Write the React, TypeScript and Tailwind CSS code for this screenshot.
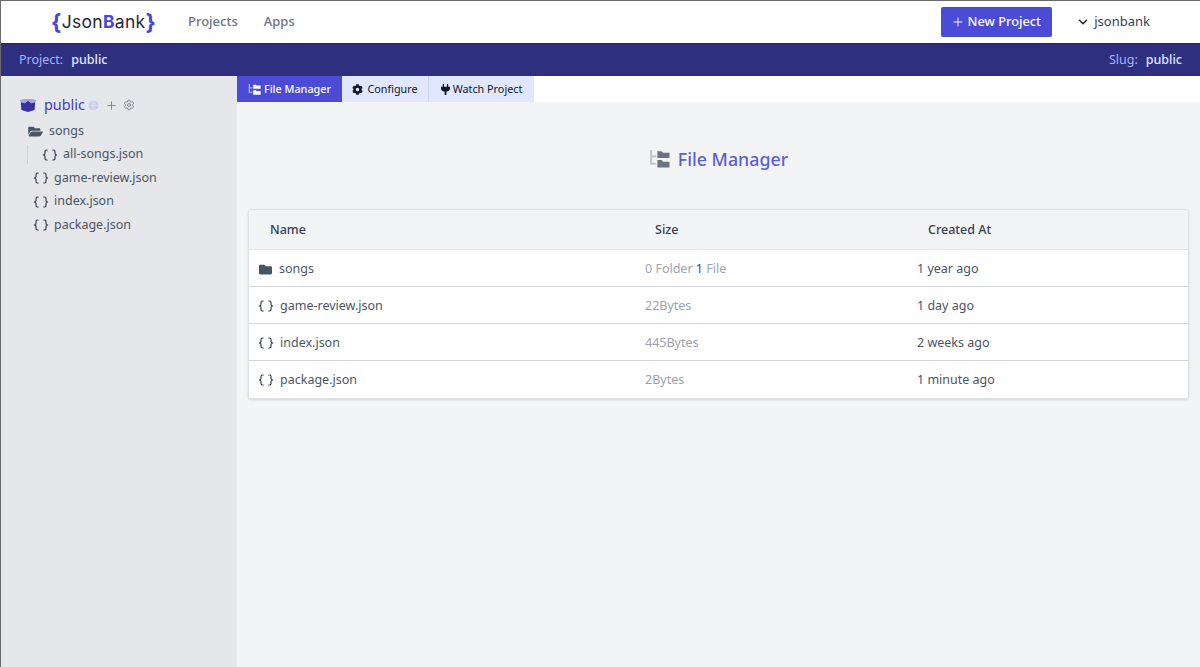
import React from "react";
import { ChevronDown, Plus, Settings } from "lucide-react";
import { FaCog, FaFolder, FaFolderOpen } from "react-icons/fa";

const font = { fontFamily: '"Noto Sans", sans-serif' };

function CurlyIcon({ className }: { className?: string }) {
  return (
    <svg viewBox="0 0 16 12" fill="none" stroke="currentColor" strokeWidth="1.2" strokeLinecap="round" strokeLinejoin="round" className={className}>
      <path d="M5.2 1H4.4C3.5 1 3 1.5 3 2.4V4.4C3 5.2 2.5 5.7 1.4 6C2.5 6.3 3 6.8 3 7.6V9.6C3 10.5 3.5 11 4.4 11H5.2" />
      <path d="M10.8 1H11.6C12.5 1 13 1.5 13 2.4V4.4C13 5.2 13.5 5.7 14.6 6C13.5 6.3 13 6.8 13 7.6V9.6C13 10.5 12.5 11 11.6 11H10.8" />
    </svg>
  );
}

function TreeIcon({ className, fade, solid }: { className?: string; fade: string; solid: string }) {
  return (
    <svg viewBox="0 0 20 17" className={className}>
      <path d="M1 0H3V5H7V7H3V12H7V14H1Z" fill={fade} />
      <path d="M8 1H12L13.5 2.5H19.5V7.5H8Z" fill={solid} />
      <path d="M8 9.5H12L13.5 11H19.5V16.5H8Z" fill={solid} />
    </svg>
  );
}

function BoxIcon() {
  return (
    <svg viewBox="0 0 16 13" className="w-[16px] h-[13px]">
      <path d="M0 1L3.5 0L12.5 0L16 1L15.5 3.5L11 4.2L8 1.8L5 4.2L0.5 3.5Z" fill="#a5a6e0" />
      <path d="M0.8 3.5L5 4.2L8 1.8L11 4.2L15.2 3.5L14.6 11L8 13L1.4 11Z" fill="#3730a3" />
    </svg>
  );
}

function GlobeIcon() {
  return (
    <svg viewBox="0 0 12 12" className="ml-[3px] w-[11px] h-[11px]" fill="none">
      <circle cx="6" cy="6" r="5.5" fill="#c7cbe8" />
      <path d="M0.5 6H11.5M6 0.5V11.5M6 0.5C3.5 3.5 3.5 8.5 6 11.5M6 0.5C8.5 3.5 8.5 8.5 6 11.5" stroke="#e5e7eb" strokeWidth="0.6" />
    </svg>
  );
}

function PlugIcon() {
  return (
    <svg viewBox="0 0 10 12" className="w-[9px] h-[11px]" fill="currentColor">
      <path d="M2 0H3.4V3H6.6V0H8V3H10V4.6C10 6.6 8.6 8 6 8.3V12H4V8.3C1.4 8 0 6.6 0 4.6V3H2Z" />
    </svg>
  );
}

function SidebarFile({ name, nested }: { name: string; nested?: boolean }) {
  return (
    <div className={`flex items-center h-[23.5px] text-[12.5px] text-[#4b5563] ${nested ? "ml-[26px]" : "ml-[32px]"}`}>
      {nested && <span className="w-px h-[19px] bg-[#d1d5db] mr-[14px]" />}
      <CurlyIcon className="w-[16px] h-[12px] text-[#374151] mr-[5px]" />
      <span>{name}</span>
    </div>
  );
}

const rows = [
  { name: "game-review.json", size: "22Bytes", created: "1 day ago" },
  { name: "index.json", size: "445Bytes", created: "2 weeks ago" },
  { name: "package.json", size: "2Bytes", created: "1 minute ago" },
];

export default function App() {
  return (
    <div className="min-h-[667px] flex flex-col bg-[#f3f4f6] border-t border-l border-[#6b6b6b]" style={font}>
      {/* Top nav */}
      <header className="h-[42px] bg-white flex items-center shrink-0">
        <div className="ml-[50px] w-[137px] flex items-center text-[17.5px] tracking-[0.3px] text-[#1f2937] leading-none" style={{ fontFamily: "Inter, sans-serif" }}>
          <span className="font-bold text-[#4848d8] text-[22px]">{"{"}</span>
          <span>Json</span>
          <span className="font-bold text-[#4848d8]">B</span>
          <span>ank</span>
          <span className="font-bold text-[#4848d8] text-[22px]">{"}"}</span>
        </div>
        <nav className="flex items-center gap-[26px] text-[13px] font-medium text-[#6b7280]">
          <span>Projects</span>
          <span>Apps</span>
        </nav>
        <div className="ml-auto flex items-center">
          <button className="h-[30px] w-[111px] pr-[2px] bg-[#4b4bd6] rounded-[2px] text-white text-[12.8px] font-medium flex items-center justify-center gap-[3px]">
            <Plus size={14} strokeWidth={1.6} />
            New Project
          </button>
          <div className="ml-[24px] mr-[50px] flex items-center gap-[4px] text-[13px] text-[#374151]">
            <ChevronDown size={14} strokeWidth={2.6} className="text-[#1f2937]" />
            jsonbank
          </div>
        </div>
      </header>

      {/* Project bar */}
      <div className="h-[33px] bg-[#2e307f] border-t border-[#26276b] flex items-center justify-between pl-[18px] pr-[18px] text-[12.5px] shrink-0">
        <div>
          <span className="text-[#a5b4fc]">Project:</span>
          <span className="ml-[8px] font-medium text-[#e0e7ff]">public</span>
        </div>
        <div>
          <span className="text-[#a5b4fc]">Slug:</span>
          <span className="ml-[8px] font-medium text-[#e0e7ff]">public</span>
        </div>
      </div>

      <div className="flex flex-1">
        {/* Sidebar */}
        <aside className="w-[236px] bg-[#e5e7eb] shrink-0 pt-[19px]">
          <div className="flex items-center h-[20px] ml-[19px]">
            <BoxIcon />
            <span className="ml-[8px] text-[14.4px] text-[#4338ca]">public</span>
            <GlobeIcon />
            <Plus size={13} strokeWidth={1.4} className="ml-[6px] text-[#6b7280]" />
            <Settings size={12} strokeWidth={1.6} className="ml-[5px] text-[#6b7280]" />
          </div>
          <div className="flex items-center h-[24px] mt-[4px] ml-[27px] text-[12.5px] text-[#4b5563]">
            <FaFolderOpen className="w-[15px] h-[13px] text-[#4b5563] mr-[6px]" />
            songs
          </div>
          <SidebarFile name="all-songs.json" nested />
          <SidebarFile name="game-review.json" />
          <SidebarFile name="index.json" />
          <SidebarFile name="package.json" />
        </aside>

        <main className="flex-1 min-w-0">
          {/* Tabs */}
          <div className="h-[26px] bg-white flex text-[10.8px]">
            <div className="w-[105px] flex items-center justify-center gap-[3px] bg-[#4b4bd6] text-white font-medium">
              <TreeIcon className="w-[13px] h-[11px]" fade="#a5b4fc" solid="#ffffff" />
              File Manager
            </div>
            <div className="w-[87px] flex items-center justify-center gap-[4px] bg-[#e0e7ff] text-[#111827] border-r border-[#cbd5f5]">
              <FaCog className="w-[11px] h-[11px]" />
              Configure
            </div>
            <div className="w-[105px] flex items-center justify-center gap-[3px] bg-[#e0e7ff] text-[#111827]">
              <PlugIcon />
              Watch Project
            </div>
          </div>

          <div className="px-[11px]">
            {/* Title */}
            <div className="h-[107px] flex items-center justify-center gap-[8px] pt-[7px]">
              <TreeIcon className="w-[21px] h-[18px]" fade="#c4c6cc" solid="#6b7280" />
              <span className="text-[17.8px] font-medium text-[#5b5fd6]">File Manager</span>
            </div>

            {/* Table */}
            <div className="border border-[#e0e2e6] rounded-[3px] shadow-sm overflow-hidden text-[12.5px]">
              <div className="grid grid-cols-[396px_272px_1fr] h-[40px] items-center bg-[#f3f4f6] text-[#374151] font-medium border-b border-[#e5e7eb] pt-[2px]">
                <span className="pl-[21px]">Name</span>
                <span className="pl-[10px]">Size</span>
                <span className="pl-[11px]">Created At</span>
              </div>
              <div className="grid grid-cols-[396px_272px_1fr] h-[37px] items-center bg-white border-b border-[#d1d5db] pt-[2px]">
                <div className="pl-[9px] flex items-center text-[#4b5563]">
                  <FaFolder className="w-[15px] h-[13px] text-[#475569] mr-[6px]" />
                  songs
                </div>
                <div className="text-[#9ca3af]">
                  0 Folder <span className="text-[#4338ca]">1</span> File
                </div>
                <span className="text-[#4b5563]">1 year ago</span>
              </div>
              {rows.map((row, i) => (
                <div key={row.name} className={`grid grid-cols-[396px_272px_1fr] h-[37px] items-center bg-white ${i < rows.length - 1 ? "border-b border-[#d1d5db] pt-[2px]" : "pt-[1px]"}`}>
                  <div className="pl-[9px] flex items-center text-[#4b5563]">
                    <CurlyIcon className="w-[16px] h-[12px] text-[#374151] mr-[6px]" />
                    {row.name}
                  </div>
                  <span className="text-[#9ca3af]">{row.size}</span>
                  <span className="text-[#4b5563]">{row.created}</span>
                </div>
              ))}
            </div>
          </div>
        </main>
      </div>
    </div>
  );
}
